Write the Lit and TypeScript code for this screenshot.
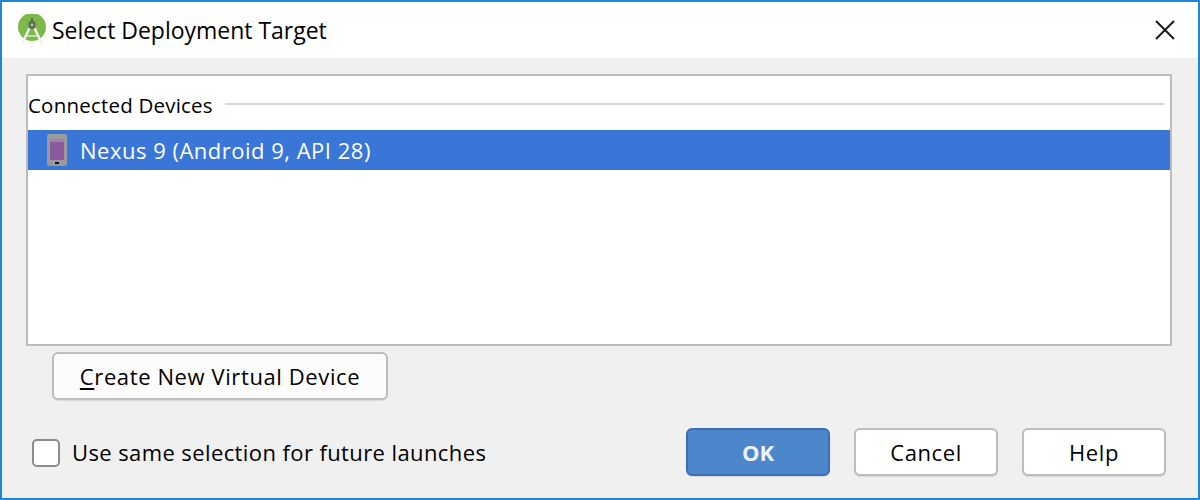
import { LitElement, css, html } from 'lit';
import { customElement } from 'lit/decorators.js';

@customElement('app-root')
export class AppRoot extends LitElement {
  static styles = css`
    :host {
      display: block;
      width: 1200px;
      height: 500px;
      font-family: 'Open Sans', 'Noto Sans', sans-serif;
      color: #000;
    }
    .window {
      box-sizing: border-box;
      width: 1200px;
      height: 500px;
      border: 2px solid #1f86d8;
      display: flex;
      flex-direction: column;
      background: #f0f0f0;
    }
    .title {
      height: 56px;
      background: #fff;
      display: flex;
      align-items: center;
      padding: 0 22px 0 16px;
      gap: 6px;
      font-size: 23px;
      letter-spacing: -0.02px;
    }
    .title span { flex: 1; }
    .logo { width: 28px; height: 32px; }
    .close { width: 22px; height: 22px; }
    .body {
      flex: 1;
      display: flex;
      flex-direction: column;
      padding: 16px 26px 0 24px;
    }
    .list {
      box-sizing: border-box;
      height: 272px;
      background: #fff;
      border: 2px solid #bdbdbd;
      display: flex;
      flex-direction: column;
    }
    .group {
      height: 54px;
      box-sizing: border-box;
      padding: 4px 6px 0 0;
      display: flex;
      align-items: center;
      gap: 12px;
      font-size: 20.5px;
      letter-spacing: 0.2px;
    }
    .group i {
      flex: 1;
      height: 2px;
      background: #d6d6d6;
      margin-top: -2px;
    }
    .row {
      height: 40px;
      background: #3a75d8;
      color: #fff;
      display: flex;
      align-items: center;
      padding-left: 18px;
      gap: 12px;
      font-size: 22px;
      letter-spacing: 0.5px;
    }
    .device { width: 22px; height: 32px; }
    button {
      box-sizing: border-box;
      font: inherit;
      font-size: 22px;
      letter-spacing: 0.6px;
      color: #000;
      background: #fff;
      border: 2px solid #bdbdbd;
      border-radius: 6px;
      box-shadow: 0 1px 1px #d8d8d8;
      padding: 0;
      height: 48px;
      width: 144px;
    }
    .create {
      align-self: flex-start;
      width: 336px;
      margin: 6px 0 0 26px;
      background: #fcfcfc;
    }
    .create u { text-underline-offset: 3px; }
    .footer {
      display: flex;
      align-items: center;
      margin-top: 28px;
      gap: 24px;
      padding-right: 6px;
    }
    .check {
      display: flex;
      align-items: center;
      gap: 12px;
      flex: 1;
      margin-left: 6px;
      font-size: 22px;
      letter-spacing: 0.4px;
    }
    .box {
      box-sizing: border-box;
      width: 28px;
      height: 28px;
      background: #fff;
      border: 2px solid #8c8c8c;
      border-radius: 5px;
      margin-top: 2px;
    }
    .ok {
      background: #4c86cb;
      border-color: #3a6fb8;
      color: #eef3fa;
      font-weight: 700;
      letter-spacing: 0;
    }
  `;

  render() {
    return html`
      <div class="window">
        <div class="title">
          <svg class="logo" viewBox="0 0 28 32">
            <circle cx="14" cy="13" r="14" fill="#7cb84a" />
            <path d="M4 30 L11.5 14 M24 30 L16.5 14" stroke="#f2f2f2" stroke-width="2.4" fill="none" />
            <path d="M8.5 22 H19.5" stroke="#dcebcb" stroke-width="1.5" />
            <rect x="10.5" y="7" width="7" height="8" rx="3" fill="#5f6b58" />
            <rect x="13" y="4" width="2" height="4" fill="#5f6b58" />
            <circle cx="14" cy="11" r="1.4" fill="#a9d080" />
          </svg>
          <span>Select Deployment Target</span>
          <svg class="close" viewBox="0 0 22 22">
            <path d="M2 2 L20 20 M20 2 L2 20" stroke="#1a1a1a" stroke-width="2" fill="none" />
          </svg>
        </div>
        <div class="body">
          <div class="list">
            <div class="group"><span>Connected Devices</span><i></i></div>
            <div class="row">
              <svg class="device" viewBox="0 0 20 32">
                <rect width="20" height="32" rx="2" fill="#9a9a9a" />
                <rect x="3" y="5" width="14" height="21" fill="#8a5a9e" />
                <rect x="3" y="5" width="14" height="3" fill="#a57cb8" />
                <rect x="8" y="28" width="4" height="2" fill="#111" />
              </svg>
              <span>Nexus 9 (Android 9, API 28)</span>
            </div>
          </div>
          <button class="create"><u>C</u>reate New Virtual Device</button>
          <div class="footer">
            <div class="check"><div class="box"></div><span>Use same selection for future launches</span></div>
            <button class="ok">OK</button>
            <button>Cancel</button>
            <button>Help</button>
          </div>
        </div>
      </div>
    `;
  }
}
